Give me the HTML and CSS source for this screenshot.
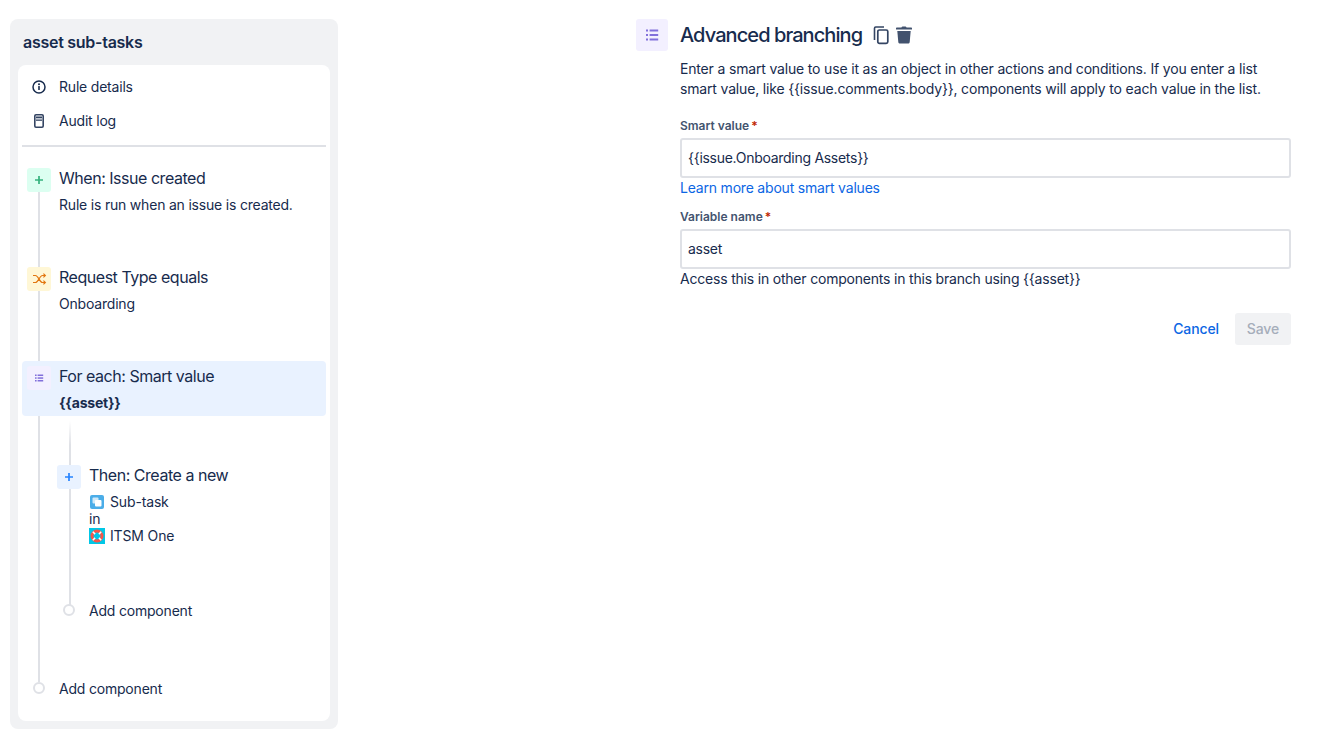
FILE: index.html
```html
<!DOCTYPE html>
<html lang="en">
<head>
<meta charset="utf-8">
<title>asset sub-tasks</title>
<link rel="stylesheet" href="styles.css">
</head>
<body>
<aside class="sidebar">
  <h2 class="rule-name">asset sub-tasks</h2>
  <div class="panel">
    <nav class="links">
      <a class="link">
        <svg class="link-icon" viewBox="0 0 16 16" fill="none"><circle cx="8" cy="8" r="6" stroke="#172b4d" stroke-width="1.5"/><rect x="7.2" y="7" width="1.6" height="4" rx=".5" fill="#172b4d"/><circle cx="8" cy="5.2" r="1" fill="#172b4d"/></svg>
        <span>Rule details</span>
      </a>
      <a class="link">
        <svg class="link-icon" viewBox="0 0 16 16" fill="none"><rect x="3.800" y="1.800" width="8.400" height="12.400" rx="1.200" stroke="#344563" stroke-width="1.600"/><rect x="5" y="3.500" width="6" height="1.800" fill="#344563"/><rect x="5" y="6.500" width="6" height="1.300" fill="#344563"/></svg>
        <span>Audit log</span>
      </a>
    </nav>
    <div class="tree">
      <div class="node">
        <span class="badge badge-green"><svg viewBox="0 0 24 24" width="24" height="24"><path d="M12 8v8M8 12h8" stroke="#36b37e" stroke-width="1.7" fill="none"/></svg></span>
        <div class="node-body">
          <div class="node-title">When: Issue created</div>
          <div class="node-desc">Rule is run when an issue is created.</div>
        </div>
      </div>
      <div class="node">
        <span class="badge badge-yellow"><svg viewBox="0 0 24 24" width="24" height="24" fill="none" stroke="#e2760f" stroke-width="1.150"><path d="M6 8.500h2.500c2.800 0 4 7 7 7H18M6 15.500h2.500c2.800 0 4-7 7-7H18"/><path d="M16.400 6.600 18.400 8.500l-2 1.900M16.400 13.600l2 1.900-2 1.900"/></svg></span>
        <div class="node-body">
          <div class="node-title">Request Type equals</div>
          <div class="node-desc">Onboarding</div>
        </div>
      </div>
      <div class="node node-selected">
        <span class="badge badge-purple"><svg viewBox="0 0 24 24" width="24" height="24" fill="#8270db"><rect x="8" y="8.500" width="1.600" height="1.500"/><rect x="8" y="11.300" width="1.600" height="1.500"/><rect x="8" y="14" width="1.600" height="1.500"/><rect x="10.600" y="8.500" width="5.600" height="1.500"/><rect x="10.600" y="11.300" width="5.600" height="1.500"/><rect x="10.600" y="14" width="5.600" height="1.500"/></svg></span>
        <div class="node-body">
          <div class="node-title">For each: Smart value</div>
          <div class="node-desc node-strong">{{asset}}</div>
        </div>
      </div>
      <div class="branch">
        <div class="node node-child">
          <span class="badge badge-blue"><svg viewBox="0 0 24 24" width="24" height="24"><path d="M12 8v8M8 12h8" stroke="#2684ff" stroke-width="1.700" fill="none"/></svg></span>
          <div class="node-body">
            <div class="node-title">Then: Create a new</div>
            <div class="node-lines">
              <div class="inline-item">
                <svg class="item-icon" viewBox="0 0 16 16"><rect x="1" y="1" width="14" height="14" rx="2" fill="#4bade8"/><rect x="3.500" y="3.500" width="6" height="6" rx="1" fill="#fff" opacity=".75"/><rect x="6" y="6" width="6.500" height="6.500" rx="1" fill="#fff"/></svg>
                <span>Sub-task</span>
              </div>
              <div class="in-word">in</div>
              <div class="inline-item">
                <svg class="item-icon" viewBox="0 0 16 16" fill="none"><rect width="16" height="16" fill="#00c7e6"/><circle cx="8" cy="8" r="5" stroke="#f5564a" stroke-width="3"/><path d="M3.800 3.800l2.300 2.300M12.200 3.800 9.900 6.100M3.800 12.200l2.300-2.300M12.200 12.200 9.900 9.900" stroke="#fff" stroke-width="1.500"/></svg>
                <span>ITSM One</span>
              </div>
            </div>
          </div>
        </div>
        <div class="add add-child"><span class="dot"></span><span>Add component</span></div>
      </div>
      <div class="add add-root"><span class="dot"></span><span>Add component</span></div>
    </div>
  </div>
</aside>
<main class="editor">
  <header class="editor-head">
    <span class="head-badge"><svg viewBox="0 0 32 32" width="32" height="32" fill="#8270db"><rect x="10" y="10.500" width="2" height="2"/><rect x="10" y="15" width="2" height="2"/><rect x="10" y="19.500" width="2" height="2"/><rect x="13.600" y="10.500" width="8.600" height="2"/><rect x="13.600" y="15" width="8.600" height="2"/><rect x="13.600" y="19.500" width="8.600" height="2"/></svg></span>
    <h1 class="editor-title">Advanced branching</h1>
    <svg class="tool" viewBox="0 0 18 20" fill="none"><path d="M2.500 15V3.200C2.500 2.500 3 2 3.700 2H12" stroke="#344563" stroke-width="1.600"/><rect x="5.800" y="5" width="10" height="13.400" rx="1.600" stroke="#344563" stroke-width="1.700"/></svg>
    <svg class="tool tool-trash" viewBox="0 0 18 20"><path d="M6.500 2.500C6.700 1.700 7.200 1.400 8 1.400h2c.8 0 1.300.3 1.500 1.100H16c.6 0 1 .4 1 1v1.100H1V3.500c0-.6.4-1 1-1z" fill="#42526e"/><path d="M2.300 6h13.400l-1 10.900c-.1 1-.8 1.700-1.800 1.700H5.100c-1 0-1.700-.7-1.800-1.700z" fill="#42526e"/></svg>
  </header>
  <div class="editor-body">
    <p class="intro">Enter a smart value to use it as an object in other actions and conditions. If you enter a list smart value, like {{issue.comments.body}}, components will apply to each value in the list.</p>
    <div class="field">
      <label class="label">Smart value<span class="req">*</span></label>
      <input class="input" type="text" value="{{issue.Onboarding Assets}}">
      <a class="help help-link">Learn more about smart values</a>
    </div>
    <div class="field field-second">
      <label class="label">Variable name<span class="req">*</span></label>
      <input class="input" type="text" value="asset">
      <div class="help">Access this in other components in this branch using {{asset}}</div>
    </div>
    <div class="actions">
      <button class="btn btn-link" type="button">Cancel</button>
      <button class="btn btn-disabled" type="button" disabled>Save</button>
    </div>
  </div>
</main>
</body>
</html>
```
FILE: styles.css
```css
* { box-sizing: border-box; }
html, body { height: 100%; }
body {
  margin: 0;
  display: flex;
  align-items: flex-start;
  background: #fff;
  color: #172b4d;
  font: 14px/20px Inter, "Liberation Sans", sans-serif;
  letter-spacing: -0.2px;
  overflow: hidden;
}
.sidebar {
  flex: none;
  width: 328px;
  height: 710px;
  margin: 19px 0 0 10px;
  padding: 0 8px 8px;
  display: flex;
  flex-direction: column;
  background: #f1f2f4;
  border-radius: 8px;
}
.rule-name {
  margin: 0;
  padding: 13px 5px 0;
  height: 46px;
  font-size: 16px;
  line-height: 20px;
  font-weight: 600;
  letter-spacing: -0.27px;
}
.panel {
  flex: 1;
  padding: 5px 4px 0;
  background: #fff;
  border-radius: 8px;
}
.links {
  height: 77px;
  padding-bottom: 6px;
  border-bottom: 2px solid #dfe1e6;
  display: flex;
  flex-direction: column;
}
.link {
  height: 34px;
  display: flex;
  align-items: center;
  gap: 12px;
  padding-left: 9px;
}
.link-icon { width: 16px; height: 16px; flex: none; }
.tree {
  position: relative;
  padding-top: 16px;
}
.tree::before {
  content: "";
  position: absolute;
  left: 16px;
  top: 45px;
  width: 2px;
  height: 490px;
  background: #dfe1e6;
}
.node {
  position: relative;
  display: flex;
  gap: 8px;
  height: 55px;
  padding: 5px;
  margin-bottom: 44px;
  border-radius: 4px;
}
.node-selected {
  background: #e9f2ff;
  margin-bottom: 9px;
}
.badge {
  flex: none;
  width: 24px;
  height: 24px;
  border-radius: 3px;
}
.badge svg { display: block; }
.badge-green { background: #dcfff1; }
.badge-yellow { background: #fff7d6; }
.badge-purple { background: #f3f0ff; }
.badge-blue { background: #e9f2ff; }
.node-title { font-size: 16px; line-height: 20px; letter-spacing: -0.47px; }
.node-desc { margin-top: 7px; font-size: 14px; line-height: 20px; }
.node-strong { font-weight: 700; }
.branch {
  position: relative;
  margin-left: 30px;
  padding-top: 35px;
}
.branch::before {
  content: "";
  position: absolute;
  left: 17px;
  top: -4px;
  width: 2px;
  height: 184px;
  background: linear-gradient(#fff, #dfe1e6 24px);
}
.node-child {
  height: auto;
  margin: 0;
}
.node-lines { margin-top: 8px; line-height: 17px; letter-spacing: -0.15px; }
.inline-item { display: flex; align-items: center; gap: 5px; height: 17px; }
.item-icon { width: 16px; height: 16px; flex: none; display: block; }
.in-word { color: #172b4d; }
.add {
  position: relative;
  display: flex;
  align-items: center;
  height: 20px;
  gap: 14px;
}
.add-child { margin-top: 52px; padding-left: 11px; }
.add-root { margin-top: 58px; padding-left: 11px; }
.dot {
  flex: none;
  width: 12px;
  height: 12px;
  margin-bottom: 2px;
  border: 2px solid #dfe1e6;
  border-radius: 50%;
  background: #fff;
}
.editor {
  flex: none;
  width: 655px;
  margin: 19px 0 0 298px;
}
.editor-head {
  display: flex;
  align-items: center;
  height: 32px;
}
.head-badge {
  flex: none;
  width: 32px;
  height: 32px;
  margin-right: 12px;
  background: #f3f0ff;
  border-radius: 3px;
}
.head-badge svg { display: block; }
.editor-title {
  margin: 0 10px 0 0;
  font-size: 20px;
  line-height: 24px;
  font-weight: 500;
  letter-spacing: -0.92px;
}
.tool { width: 18px; height: 20px; flex: none; }
.tool-trash { margin-left: 5px; }
.editor-body {
  padding: 8px 0 0 44px;
}
.intro {
  margin: 0 0 19px;
  width: 600px;
  letter-spacing: -0.17px;
}
.field { display: flex; flex-direction: column; }
.field-second { margin-top: 11px; }
.label {
  display: block;
  height: 20px;
  font-size: 12px;
  line-height: 16px;
  font-weight: 600;
  letter-spacing: 0;
  color: #44546f;
}
.req { color: #bf2600; margin-left: 2px; }
.input {
  display: block;
  width: 611px;
  height: 40px;
  padding: 0 6px 2px;
  border: 2px solid #dfe1e6;
  border-radius: 3px;
  background: #fff;
  color: #172b4d;
  font: 14px/20px Inter, "Liberation Sans", sans-serif;
  letter-spacing: -0.28px;
  outline: 0;
}
.help { display: block; height: 20px; }
.help-link { color: #0c66e4; }
.actions {
  display: flex;
  justify-content: flex-end;
  align-items: center;
  width: 611px;
  margin-top: 24px;
  gap: 16px;
}
.btn {
  height: 32px;
  padding: 0 12px;
  border: 0;
  border-radius: 3px;
  font: 500 14px/20px Inter, "Liberation Sans", sans-serif;
  letter-spacing: -0.1px;
}
.btn-link { padding: 0; background: none; color: #0c66e4; }
.btn-disabled { width: 56px; padding: 0; background: #f1f2f4; color: #a5adba; }
```
